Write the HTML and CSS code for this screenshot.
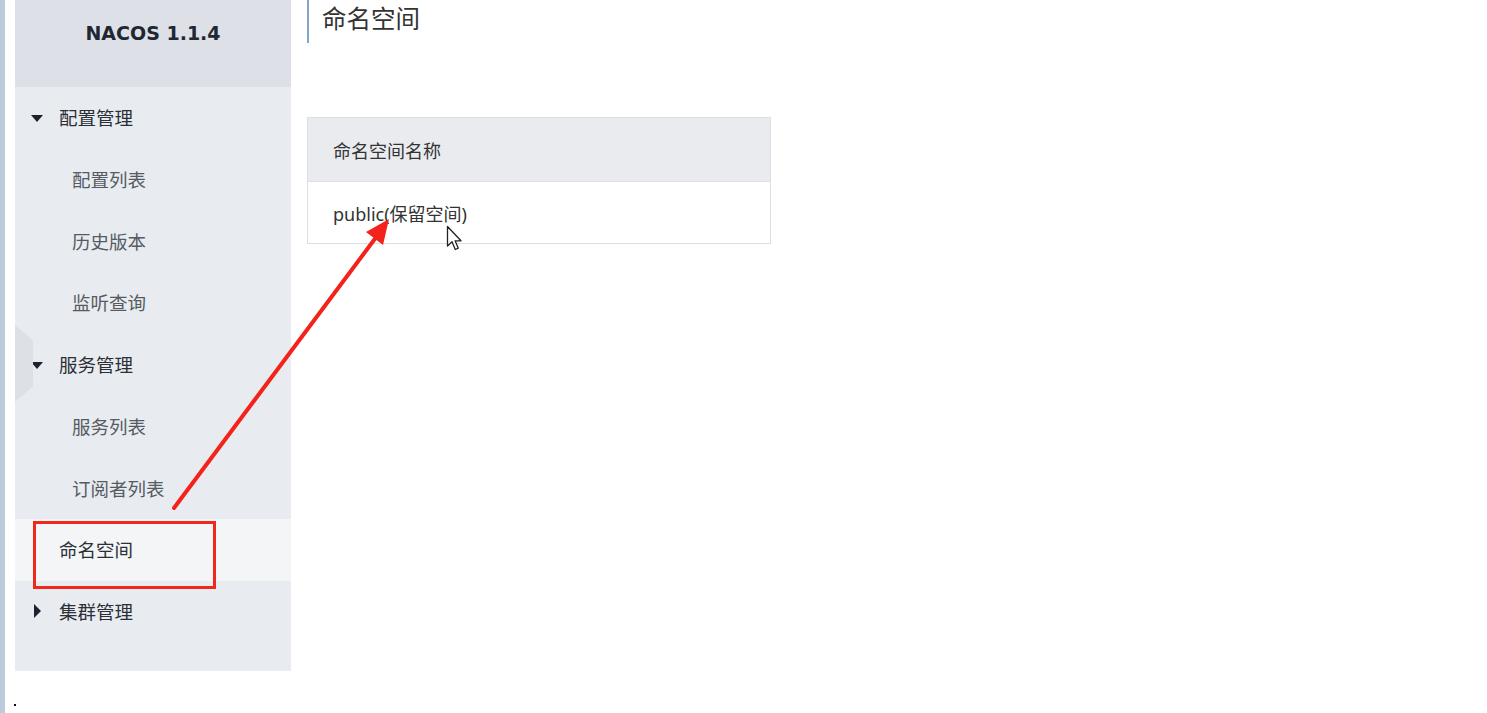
FILE: index.html
```html
<!DOCTYPE html>
<html lang="zh">
<head>
  <meta charset="UTF-8">
  <title>命名空间 - Nacos</title>
  <link rel="stylesheet" href="styles.css">
</head>
<body>
  <div class="page">
    <div class="edge"></div>

    <aside class="sidebar">
      <div class="brand">NACOS 1.1.4</div>
      <ul class="menu">
        <li class="group open">配置管理</li>
        <li class="item">配置列表</li>
        <li class="item">历史版本</li>
        <li class="item">监听查询</li>
        <li class="group open">服务管理</li>
        <li class="item">服务列表</li>
        <li class="item">订阅者列表</li>
        <li class="group-link active">命名空间</li>
        <li class="group closed">集群管理</li>
      </ul>
      <div class="handle"></div>
    </aside>

    <main class="main">
      <h1 class="title">命名空间</h1>
      <table class="ns-table">
        <thead>
          <tr><th>命名空间名称</th></tr>
        </thead>
        <tbody>
          <tr><td>public(保留空间)</td></tr>
        </tbody>
      </table>
    </main>
  </div>

  <!-- annotations drawn over the screenshot -->
  <div class="mark-box"></div>
  <svg class="mark-arrow" width="1487" height="713" viewBox="0 0 1487 713">
    <line x1="174" y1="508" x2="377" y2="236" stroke="#f3221a" stroke-width="4" stroke-linecap="round"/>
    <polygon points="389,219 383,245 366,232" fill="#f3221a"/>
  </svg>
  <svg class="cursor" width="20" height="30" viewBox="0 0 20 30">
    <path d="M1.5 1.5 L1.5 21 L6 16.8 L9.3 24.5 L12.3 23.2 L9.1 15.8 L15 15.8 Z" fill="#fff" stroke="#222" stroke-width="1.3" stroke-linejoin="round"/>
  </svg>
  <div class="dot"></div>
</body>
</html>
```

FILE: styles.css
```css
html, body {
  margin: 0;
  padding: 0;
  height: 713px;
  background: #fff;
  font-family: "Noto Sans", "Noto Sans CJK SC", sans-serif;
  color: #333;
  overflow: hidden;
}
.page {
  display: flex;
  height: 713px;
}
.edge {
  width: 5px;
  background: #bccbdb;
  margin-right: 10px;
}
.sidebar {
  position: relative;
  width: 276px;
  height: 671px;
  background: #e8ebef;
}
.brand {
  height: 87px;
  background: #dde1e7;
  text-align: center;
  font-family: "DejaVu Sans", sans-serif;
  font-weight: bold;
  font-size: 19px;
  line-height: 66px;
  color: #1f2733;
}
.menu {
  list-style: none;
  margin: 0;
  padding: 0;
}
.menu li {
  height: 61.75px;
  line-height: 61.75px;
  font-size: 18.5px;
  position: relative;
}
.group, .group-link {
  padding-left: 44px;
  color: #2b2f36;
}
.item {
  padding-left: 57px;
  color: #555b63;
}
.group-link.active {
  background: #f3f5f7;
}
.group.open::before {
  content: "";
  position: absolute;
  left: 16px;
  top: 28px;
  border-left: 6.5px solid transparent;
  border-right: 6.5px solid transparent;
  border-top: 7px solid #1c2330;
}
.group.closed::before {
  content: "";
  position: absolute;
  left: 19px;
  top: 23px;
  border-top: 7px solid transparent;
  border-bottom: 7px solid transparent;
  border-left: 7px solid #1c2330;
}
.handle {
  position: absolute;
  left: 0;
  top: 325px;
  width: 18px;
  height: 77px;
  background: #dde0e4;
  clip-path: polygon(0 0, 100% 20%, 100% 80%, 0 100%);
}
.main {
  padding-left: 16px;
}
.title {
  margin: 0;
  height: 43px;
  border-left: 2px solid #80a7c8;
  padding-left: 13px;
  font-size: 24.5px;
  font-weight: normal;
  line-height: 38px;
  color: #333;
}
.ns-table {
  margin-top: 74px;
  width: 464px;
  border-collapse: collapse;
  font-size: 18px;
}
.ns-table th, .ns-table td {
  border: 1px solid #dcdfe3;
  text-align: left;
  font-weight: normal;
  padding: 0 25px;
}
.ns-table th {
  height: 63px;
  background: #e9ebef;
  color: #333;
}
.ns-table td {
  height: 61px;
  color: #333;
}
.mark-box {
  position: absolute;
  left: 33px;
  top: 521px;
  width: 177px;
  height: 62px;
  border: 3px solid #f0281c;
}
.mark-arrow {
  position: absolute;
  left: 0;
  top: 0;
  pointer-events: none;
}
.cursor {
  position: absolute;
  left: 446px;
  top: 225px;
}
.dot {
  position: absolute;
  left: 14px;
  top: 704px;
  width: 2px;
  height: 2px;
  background: #111;
}
```
